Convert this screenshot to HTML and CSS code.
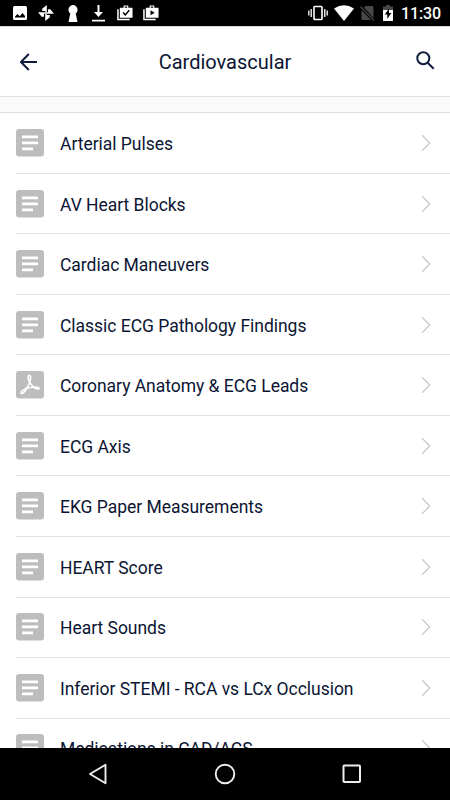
FILE: index.html
```html
<!DOCTYPE html>
<html lang="en">
<head>
<meta charset="utf-8">
<title>Cardiovascular</title>
<link rel="stylesheet" href="styles.css">
</head>
<body>
<svg class="defs" width="0" height="0" aria-hidden="true">
  <symbol id="doc" viewBox="0 0 28 28"><rect width="28" height="27.4" rx="3" fill="#bdbdbd"/><path d="M6 7.800h16M6 13.800h16M6 19.800h11" stroke="#fff" stroke-width="2.700" fill="none"/></symbol>
  <symbol id="pdf" viewBox="0 0 28 28"><rect width="28" height="27.4" rx="3" fill="#bdbdbd"/><path d="M5.300 22.300c-1.200-1.300 2-3.800 5.500-5 4.500-1.500 11.400-1.900 12.200-.2.700 1.500-3 1.200-5.300-.8-3-2.600-6.200-8.300-5.500-10.900.5-1.500 2.500-1.200 2.500.6 0 3.300-1.900 8.200-4.300 12-1.700 2.800-4 5.300-5.100 4.300Z" stroke="#fff" stroke-width="1.600" fill="none"/></symbol>
  <symbol id="chevron" viewBox="0 0 10 18"><path d="M1 1.200 8.700 9 1 16.800" stroke="#c4c4c6" stroke-width="1.200" fill="none"/></symbol>
</svg>
<div class="screen">
  <div class="status">
    <div class="group notices">
      <svg width="14" height="14" viewBox="0 0 14 14"><path fill="#fff" fill-rule="evenodd" d="M1.500 0h11Q14 0 14 1.500v11q0 1.500-1.500 1.500h-11Q0 14 0 12.500v-11Q0 0 1.500 0ZM2 11.500h10V10L9.500 7 6.800 10.200 4.500 8 2 10.500Z"/></svg>
      <svg class="pinwheel" width="16" height="16" viewBox="0 0 16 16"><g fill="#fff"><path d="M8.800 8.800V0L4.200 3.700V6H7Z"/><path d="M7.200 8.800H16l-3.700-4.600H10V7Z"/><path d="M7.200 7.200V16l4.600-3.700V10H9Z"/><path d="M8.800 7.200H0l3.700 4.600H6V9Z"/></g></svg>
      <svg class="keyhole" width="10" height="17" viewBox="0 0 10 17"><path fill="#fff" d="M5 0a4.700 4.700 0 0 1 2.700 8.400L9.500 17h-9l1.800-8.600A4.700 4.700 0 0 1 5 0Z"/></svg>
      <svg class="download" width="13" height="17" viewBox="0 0 13 17"><path fill="#fff" d="M5.500 0h2v7H11l-4.500 5L2 7h3.500ZM0 14.800h13v1.700H0Z"/></svg>
      <svg class="case" width="16" height="16" viewBox="0 0 17 16"><path d="M1 4v11h12.500" stroke="#fff" stroke-width="1.600" fill="none"/><path fill="#fff" fill-rule="evenodd" d="M3 2.500h4V0h5v2.500h4.500V13H3ZM8.300 1.200v1.300h2.500V1.200Z"/><path d="m6.500 7.500 2.300 2.500L13 5.200" stroke="#000" stroke-width="1.600" fill="none"/></svg>
      <svg class="case-play" width="16" height="16" viewBox="0 0 17 16"><path d="M1 4v11h12.500" stroke="#fff" stroke-width="1.600" fill="none"/><path fill="#fff" fill-rule="evenodd" d="M3 2.500h4V0h5v2.500h4.500V13H3ZM8.300 1.200v1.300h2.500V1.200ZM8 5v5.500l4.500-2.700Z"/></svg>
    </div>
    <div class="group system">
      <svg width="20" height="16" viewBox="0 0 20 16"><path d="M.8 5.500v5M3.200 4v8M16.800 4v8M19.200 5.500v5" stroke="#fff" stroke-width="1.300"/><rect x="6" y="1.500" width="8" height="13" rx=".8" stroke="#fff" stroke-width="1.600" fill="none"/></svg>
      <svg width="20" height="16" viewBox="0 0 20 16"><path fill="#fff" d="M0 3.500Q10-3 20 3.500L10 16Z"/></svg>
      <svg width="15" height="16" viewBox="0 0 15 16"><path fill="#484848" d="M5.500 1H12q1.500 0 1.500 1.500V13L4 2.500Z M1.500 5 11 15H3q-1.500 0-1.500-1.500Z"/><path d="m.5 1.500 13.500 14" stroke="#484848" stroke-width="1.200"/></svg>
      <svg class="battery" width="10" height="16" viewBox="0 0 10 16"><path fill="#484848" d="M3 0h4v1.500h3V6H0V1.500h3Z"/><path fill="#fff" d="M0 5h10v11H0Z"/><path fill="#000" d="M6 3.500 1.800 9.500h2.500V14l4-6H6Z"/></svg>
      <span class="clock">11:30</span>
    </div>
  </div>
  <header class="bar">
    <svg width="18" height="18" viewBox="0 0 18 18"><path d="M17 9H1.300M8.800 1 1 9l7.800 8" stroke="#101c3c" stroke-width="2" fill="none"/></svg>
    <h1>Cardiovascular</h1>
    <svg class="search" width="19" height="19" viewBox="0 0 19 19"><circle cx="7.300" cy="7.300" r="6" stroke="#101c3c" stroke-width="2" fill="none"/><path d="m11.700 11.700 6 6" stroke="#101c3c" stroke-width="2"/></svg>
  </header>
  <div class="spacer"></div>
  <ul class="list">
    <li><svg class="icon"><use href="#doc"/></svg><span>Arterial Pulses</span><svg class="chev"><use href="#chevron"/></svg></li>
    <li><svg class="icon"><use href="#doc"/></svg><span>AV Heart Blocks</span><svg class="chev"><use href="#chevron"/></svg></li>
    <li><svg class="icon"><use href="#doc"/></svg><span>Cardiac Maneuvers</span><svg class="chev"><use href="#chevron"/></svg></li>
    <li><svg class="icon"><use href="#doc"/></svg><span>Classic ECG Pathology Findings</span><svg class="chev"><use href="#chevron"/></svg></li>
    <li><svg class="icon"><use href="#pdf"/></svg><span>Coronary Anatomy &amp; ECG Leads</span><svg class="chev"><use href="#chevron"/></svg></li>
    <li><svg class="icon"><use href="#doc"/></svg><span>ECG Axis</span><svg class="chev"><use href="#chevron"/></svg></li>
    <li><svg class="icon"><use href="#doc"/></svg><span>EKG Paper Measurements</span><svg class="chev"><use href="#chevron"/></svg></li>
    <li><svg class="icon"><use href="#doc"/></svg><span>HEART Score</span><svg class="chev"><use href="#chevron"/></svg></li>
    <li><svg class="icon"><use href="#doc"/></svg><span>Heart Sounds</span><svg class="chev"><use href="#chevron"/></svg></li>
    <li><svg class="icon"><use href="#doc"/></svg><span>Inferior STEMI - RCA vs LCx Occlusion</span><svg class="chev"><use href="#chevron"/></svg></li>
    <li><svg class="icon"><use href="#doc"/></svg><span>Medications in CAD/ACS</span><svg class="chev"><use href="#chevron"/></svg></li>
  </ul>
  <nav class="nav">
    <svg width="22" height="22" viewBox="0 0 22 22"><path d="M18.500 1.800v18.400L3 11Z" stroke="#eee" stroke-width="1.900" stroke-linejoin="round" fill="none"/></svg>
    <svg width="22" height="22" viewBox="0 0 22 22"><circle cx="11" cy="11" r="9.300" stroke="#eee" stroke-width="1.900" fill="none"/></svg>
    <svg width="22" height="22" viewBox="0 0 22 22"><rect x="2.500" y="2.500" width="16.500" height="16.500" rx=".8" stroke="#eee" stroke-width="2" fill="none"/></svg>
  </nav>
</div>
</body>
</html>
```
FILE: styles.css
```css
* { box-sizing: border-box; }
body { margin: 0; font-family: Roboto, sans-serif; color: #0b1533; background: #fff; }
svg { display: block; flex: none; }
.defs { position: absolute; }
.screen { width: 450px; height: 800px; display: flex; flex-direction: column; overflow: hidden; }
.status { height: 26px; flex: none; background: #000; display: flex; justify-content: space-between; padding: 0 9px 0 13px; }
.group { display: flex; align-items: center; }
.pinwheel { margin-left: 11px; }
.keyhole { margin-left: 13.5px; }
.download { margin-left: 14.5px; }
.case { margin-left: 12px; }
.case-play { margin-left: 10px; }
.system { gap: 6px; }
.battery { margin-left: 2px; }
.clock { color: #fff; font-size: 16px; font-weight: 500; line-height: 26px; margin-left: 2px; padding-top: 2px; letter-spacing: -.1px; }
.bar { height: 71px; flex: none; display: flex; align-items: center; justify-content: space-between; padding: 1px 15px 0 20px; border-top: 1px solid #d8d8d8; border-bottom: 1px solid #e2e2e2; }
h1 { margin: 0 4px 0 0; font-size: 20px; font-weight: 400; line-height: 24px; }
.search { margin-bottom: 3px; }
.spacer { height: 16px; flex: none; border-bottom: 1px solid #dedede; background: #fafafa; }
.list { list-style: none; margin: 0; padding: .2px 0 0 16px; flex: 1; min-height: 0; overflow: hidden; }
.list li { height: 60.55px; display: flex; align-items: center; border-bottom: 1px solid #e2e2e2; padding-right: 19px; }
.icon { width: 28px; height: 28px; }
.list span { flex: 1; margin-left: 16px; padding-top: 2px; font-size: 17.5px; line-height: 24px; letter-spacing: -.03px; white-space: nowrap; }
.chev { width: 10px; height: 18px; }
.nav { height: 52px; flex: none; background: #000; display: flex; align-items: center; justify-content: space-between; padding: 0 87px; }
```
